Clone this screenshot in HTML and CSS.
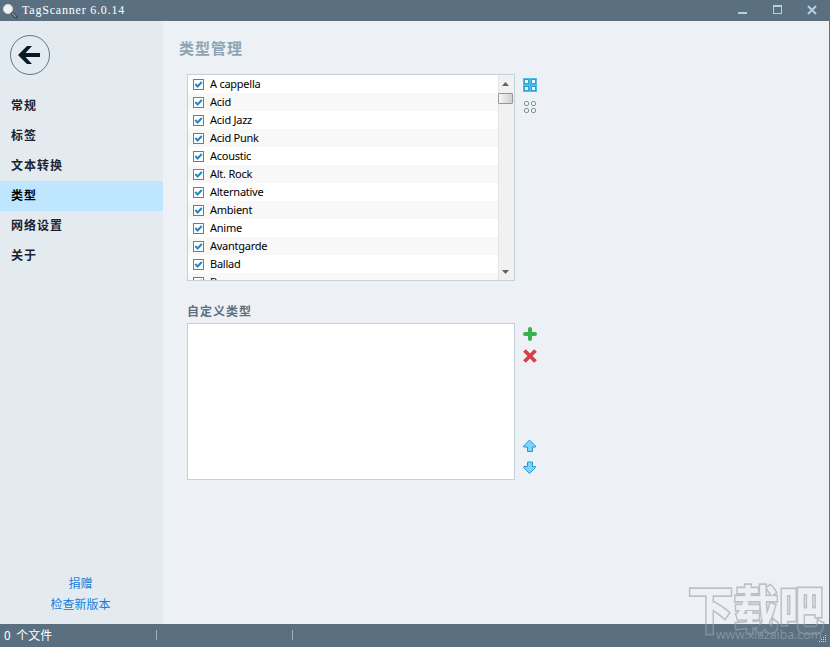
FILE: index.html
```html
<!DOCTYPE html>
<html lang="zh-CN">
<head>
  <meta charset="UTF-8" />
  <title>TagScanner 6.0.14</title>
  <link rel="stylesheet" href="styles.css">
</head>
<body>
  <div class="window">
    <header class="titlebar">
      <svg class="app-icon" width="16" height="18" viewBox="0 0 16 18">
        <path d="M10 11l4 4" stroke="#303d45" stroke-width="3" stroke-linecap="round"/>
        <path d="M10 11l4 4" stroke="#98a3a9" stroke-width="1.2"/>
        <circle cx="6" cy="7" r="4.600" fill="#f3f1ee" stroke="#d2d5d4"/>
      </svg>
      <span class="title">TagScanner 6.0.14</span>
      <svg class="window-buttons" width="82" height="20" viewBox="0 0 82 20" fill="none" stroke="#b3d1e2">
        <path d="M1 13h9" stroke-width="2"/>
        <path d="M36 6h9" stroke-width="2"/>
        <path d="M36.500 6v8M44.500 6v8M36 13.500h9"/>
        <path d="M71 6l8 8M79 6l-8 8" stroke-width="2"/>
      </svg>
    </header>

    <main class="content">
      <aside class="sidebar">
        <button class="back" type="button">
          <svg width="24" height="20" viewBox="0 0 24 20">
            <path d="M1 10l9-9h5L8.500 8H23v4H8.500l6.500 7h-5z" fill="#071a26"/>
          </svg>
        </button>
        <nav class="menu">
          <a>常规</a>
          <a>标签</a>
          <a>文本转换</a>
          <a class="active">类型</a>
          <a>网络设置</a>
          <a>关于</a>
        </nav>
        <div class="links">
          <a>捐赠</a>
          <a>检查新版本</a>
        </div>
      </aside>

      <section class="page">
        <h1>类型管理</h1>

        <div class="panel">
          <div class="box genres">
            <ul id="genreList"></ul>
            <div class="scrollbar">
              <svg width="7" height="4" viewBox="0 0 7 4"><path d="M0 4L3.500 0L7 4z" fill="#606060"/></svg>
              <div class="thumb"></div>
              <svg class="down" width="7" height="4" viewBox="0 0 7 4"><path d="M0 0h7L3.500 4z" fill="#606060"/></svg>
            </div>
          </div>
          <div class="tools">
            <svg width="14" height="14" viewBox="0 0 14 14">
              <path d="M0 0h14v14H0z" fill="#4dbbe8"/>
              <g fill="#f2fbff" stroke="#2e9fd0">
                <rect x="1.500" y="1.500" width="4" height="4"/>
                <rect x="8.500" y="1.500" width="4" height="4"/>
                <rect x="1.500" y="8.500" width="4" height="4"/>
                <rect x="8.500" y="8.500" width="4" height="4"/>
              </g>
            </svg>
            <svg width="14" height="14" viewBox="0 0 14 14" fill="#fafcfc" stroke="#78919b">
              <rect x="1.500" y="1.500" width="4" height="4" rx="1.500"/>
              <rect x="8.500" y="1.500" width="4" height="4" rx="1.500"/>
              <rect x="1.500" y="8.500" width="4" height="4" rx="1.500"/>
              <rect x="8.500" y="8.500" width="4" height="4" rx="1.500"/>
            </svg>
          </div>
        </div>

        <h2>自定义类型</h2>

        <div class="panel">
          <div class="box custom"></div>
          <div class="tools">
            <svg width="14" height="14" viewBox="0 0 14 14">
              <path d="M7 2v10M2 7h10" stroke="#36b34a" stroke-width="4" stroke-linecap="round"/>
            </svg>
            <svg width="14" height="14" viewBox="0 0 14 14">
              <path d="M1.500 1.500l11 11M12.500 1.500l-11 11" stroke="#d64045" stroke-width="3.800"/>
            </svg>
            <svg class="move-up" width="14" height="14" viewBox="0 0 14 14">
              <path d="M6.500 1L12.500 7v1H9.500v4.500h-5V8H.700V7z" fill="#7bd5fa" stroke="#2598d5" stroke-linejoin="round"/>
            </svg>
            <svg width="14" height="14" viewBox="0 0 14 14">
              <path d="M6.500 12.500L12.500 6.500v-1H9.500V1h-5v4.500H.700v1z" fill="#7bd5fa" stroke="#2598d5" stroke-linejoin="round"/>
            </svg>
          </div>
        </div>
      </section>
    </main>

    <footer class="statusbar">
      <span class="cell files">0 个文件</span>
      <span class="cell"></span>
      <svg class="grip" width="8" height="8" viewBox="0 0 8 8" fill="#d4dde1">
        <path d="M6 0h1v1H6zM4 2h1v1H4zM6 2h1v1H6zM2 4h1v1H2zM4 4h1v1H4zM6 4h1v1H6zM0 6h1v1H0zM2 6h1v1H2zM4 6h1v1H4zM6 6h1v1H6z"/>
      </svg>
    </footer>

    <svg class="watermark" width="140" height="65" viewBox="0 0 140 65">
      <defs>
        <!-- fill and outline switch where the status bar begins -->
        <linearGradient id="markFill" gradientUnits="userSpaceOnUse" x1="0" y1="0" x2="0" y2="50">
          <stop offset="0.75" stop-color="#edf1f6"/>
          <stop offset="0.75" stop-color="#5f7585"/>
        </linearGradient>
        <linearGradient id="markStroke" gradientUnits="userSpaceOnUse" x1="0" y1="0" x2="0" y2="50">
          <stop offset="0.75" stop-color="#bcc1c6"/>
          <stop offset="0.75" stop-color="#7e8e99"/>
        </linearGradient>
      </defs>
      <text class="mark-name" transform="scale(1 1.147)" x="1" y="42" textLength="136">下载吧</text>
      <text class="mark-url" x="29" y="58" textLength="106" lengthAdjust="spacingAndGlyphs">www.xiazaiba.com</text>
    </svg>
  </div>

  <script>
    const genres = ["A cappella", "Acid", "Acid Jazz", "Acid Punk", "Acoustic", "Alt. Rock",
      "Alternative", "Ambient", "Anime", "Avantgarde", "Ballad", "Bass"];
    const list = document.getElementById("genreList");

    genres.forEach(name => {
      const item = document.createElement("li");
      item.innerHTML = `<svg width="11" height="11" viewBox="0 0 11 11">
        <rect x="0.5" y="0.5" width="10" height="10" fill="#fff" stroke="#657f8b"/>
        <path d="M2.300 5l2.300 2.500L8.800 3" fill="none" stroke="#2588bb" stroke-width="2"/>
      </svg><span>${name}</span>`;
      list.appendChild(item);
    });
  </script>
</body>
</html>
```
FILE: styles.css
```css
* {
  box-sizing: border-box;
}

body {
  margin: 0;
  font-family: "Liberation Sans", "Noto Sans CJK SC", sans-serif;
  font-size: 12px;
}

svg {
  display: block;
  flex: none;
}

.window {
  position: relative;
  display: flex;
  flex-direction: column;
  width: 830px;
  height: 647px;
  overflow: hidden;
  background: #edf1f6;
}

.titlebar {
  display: flex;
  height: 21px;
  padding-left: 2px;
  background: #5a7080;
  color: #fff;
}

.app-icon {
  margin: 2px 4px 0 0;
}

.title {
  font: 12px/20px "Liberation Serif", serif;
  letter-spacing: 0.8px;
}

.window-buttons {
  margin-left: auto;
  margin-right: 11px;
}

.content {
  display: flex;
  flex: 1;
  border-right: 1px solid #5a7080;
}

.sidebar {
  display: flex;
  flex-direction: column;
  width: 163px;
  background: #e3eaf0;
}

.back {
  display: flex;
  align-items: center;
  justify-content: center;
  width: 40px;
  height: 40px;
  margin: 14px 0 16px 10px;
  padding: 0 2px 0 0;
  border: 1.5px solid #607783;
  border-radius: 50%;
  background: none;
}

.menu a {
  display: block;
  height: 30px;
  padding-left: 11px;
  font: bold 12px/27px "Noto Sans CJK SC", sans-serif;
  letter-spacing: 1px;
  color: #1b2230;
}

.menu .active {
  background: #bfe6ff;
  color: #000;
}

.links {
  display: flex;
  flex-direction: column;
  align-items: center;
  margin-top: auto;
  padding-bottom: 10px;
  font: 12px/21px "Noto Sans CJK SC", sans-serif;
  color: #1680d8;
}

.links a {
  margin-right: 2px;
}

.page {
  padding: 16px 0 0 24px;
}

h1 {
  height: 22px;
  margin: 0 0 15px -8px;
  font: bold 15px/22px "Noto Sans CJK SC", sans-serif;
  letter-spacing: 1px;
  color: #8da5b3;
}

h2 {
  height: 18px;
  margin: 21px 0 3px 0;
  font: bold 12px/18px "Noto Sans CJK SC", sans-serif;
  letter-spacing: 1px;
  color: #5a7080;
}

.panel {
  display: flex;
}

.box {
  display: flex;
  width: 328px;
  border: 1px solid #c2d1da;
  background: #fff;
}

.genres {
  height: 207px;
  overflow: hidden;
}

.custom {
  height: 157px;
}

.genres ul {
  flex: 1;
  margin: 0;
  padding: 0;
  list-style: none;
}

.genres li {
  display: flex;
  align-items: center;
  gap: 6px;
  height: 18px;
  padding-left: 5px;
  font: 11px/18px "Noto Sans", sans-serif;
  letter-spacing: -0.25px;
  color: #000;
}

.genres li:nth-child(even) {
  background: #f8f8f8;
}

.scrollbar {
  display: flex;
  flex-direction: column;
  align-items: center;
  width: 16px;
  padding: 7px 2px 6px 0;
  border-left: 1px solid #e2e4e6;
  background: #f1f1f1;
}

.thumb {
  flex: none;
  width: 15px;
  height: 11px;
  margin-top: 7px;
  border: 1px solid #979797;
  border-radius: 1px;
  background: linear-gradient(to right, #f6f6f6, #d0d0d0);
}

.down {
  margin-top: auto;
}

.tools {
  display: flex;
  flex-direction: column;
  gap: 8px;
  padding: 4px 0 5px 8px;
}

.move-up {
  margin-top: auto;
}

.statusbar {
  display: flex;
  align-items: center;
  height: 23px;
  background: #5a7080;
  color: #fff;
  font: 12px/22px "Noto Sans CJK SC", sans-serif;
}

.cell {
  display: flex;
  align-items: center;
  width: 136px;
  height: 10px;
  margin-bottom: 2px;
  border-right: 1px solid #9fb1bc;
}

.files {
  width: 157px;
  padding-left: 4px;
  word-spacing: 3px;
}

.grip {
  align-self: flex-end;
  margin: 0 3px 4px auto;
}

.watermark {
  position: absolute;
  left: 687px;
  top: 581px;
  overflow: visible;
}

.mark-name {
  font: bold 45px "Noto Sans CJK SC", sans-serif;
  fill: url(#markFill);
  stroke: url(#markStroke);
  stroke-width: 3px;
  paint-order: stroke;
}

.mark-url {
  font: 13px "Noto Sans", sans-serif;
  fill: #8293a0;
}
```
